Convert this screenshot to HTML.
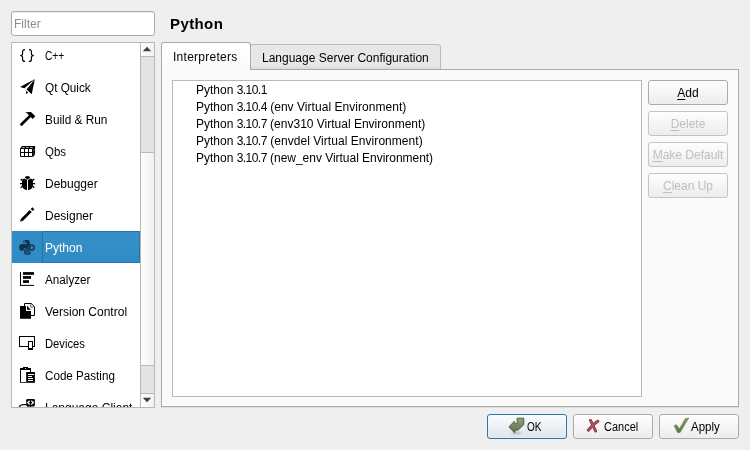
<!DOCTYPE html>
<html><head><meta charset="utf-8"><title>Preferences - Python</title>
<style>
html,body{margin:0;padding:0}
body{width:750px;height:450px;overflow:hidden;background:#efefef;position:relative;font-family:"Liberation Sans","DejaVu Sans",sans-serif;font-size:12px;color:#000}
.abs{position:absolute;box-sizing:border-box}
#filter{left:11px;top:11px;width:144px;height:25px;background:#fff;border:1px solid #aaa;border-radius:3px;box-shadow:inset 0 1px 0 rgba(0,0,0,.07)}
#filter span{position:absolute;left:2px;top:1px;line-height:23px;color:#8c8c8c}
#cat{left:11px;top:42px;width:144px;height:366px;background:#fff;border:1px solid #b8b8b8;overflow:hidden}
.it{position:absolute;left:0;width:128px;height:32px}
.it span{position:absolute;left:33px;top:1px;line-height:32px;white-space:pre;transform-origin:0 50%}
.it svg{position:absolute;left:4px;top:4px;width:24px;height:24px}
.it.sel{background:#308cc6;color:#fff}
#foc{left:30px;top:0;width:98px;height:32px;border:1px solid rgba(20,70,110,.35);border-radius:1px;background:linear-gradient(#ffffff0a,#ffffff00)}
#sb{left:128px;top:0;width:14px;height:364px;border-left:1px solid #b8b8b8;background:#e3e3e3}
#title{left:170px;top:15px;font-size:15px;font-weight:bold;line-height:18px;letter-spacing:.4px}
#pane{left:161px;top:69px;width:578px;height:338px;background:#fafafa;border:1px solid #aaa;box-shadow:0 1px 0 rgba(0,0,0,.06)}
.tab{height:27px;border:1px solid #aaa;border-bottom:none;border-radius:3px 3px 0 0;white-space:pre}
#t1{left:161px;top:42px;width:90px;height:28px;background:linear-gradient(#fff,#fafafa)}
#t1 span{position:absolute;left:11px;top:7px;line-height:14px;letter-spacing:.27px}
#t2{left:250px;top:44px;width:191px;height:25px;border-color:#bbb;background:linear-gradient(#e7e7e7 0,#e7e7e7 85%,#d9d9d9 100%)}
#t2 span{position:absolute;left:11px;top:6px;line-height:14px}
#list{left:172px;top:80px;width:470px;height:317px;background:#fff;border:1px solid #b8b8b8}
#list div{position:absolute;left:23px;height:17px;line-height:17px;white-space:pre;margin-top:1px}
#list i{font-style:normal;letter-spacing:-.55px}
#list b{font-weight:normal}
.btn{width:80px;height:25px;border:1px solid #aaa;border-radius:3px;background:linear-gradient(#fefefe,#ececec);text-align:center;line-height:25px;white-space:pre;box-shadow:inset 0 0 0 1px rgba(255,255,255,.12)}
.btn.dis{color:#bebebe;border-color:#c4c4c4}
.btn u{text-decoration:underline;text-decoration-thickness:1px;text-underline-offset:2px;text-decoration-skip-ink:none}
.btn svg{position:absolute}
.btn span{position:absolute;top:0;line-height:25px;transform-origin:0 50%}
#ok{border-color:#2d76a8;background:linear-gradient(#fafcfd,#dde6ed)}
#root{position:absolute;left:0;top:0;width:750px;height:450px;will-change:transform}
</style></head><body><div id="root">
<div id="filter" class="abs"><span>Filter</span></div>
<div id="cat" class="abs">
 <div class="it" style="top:-4px"><span style="transform:scaleX(.85)">C++</span></div>
 <div class="it" style="top:28px"><span style="transform:scaleX(.98)">Qt Quick</span></div>
 <div class="it" style="top:60px"><span style="transform:scaleX(.985)">Build &amp; Run</span></div>
 <div class="it" style="top:92px"><span style="transform:scaleX(.955)">Qbs</span></div>
 <div class="it" style="top:124px"><span>Debugger</span></div>
 <div class="it" style="top:156px"><span>Designer</span></div>
 <div class="it sel" style="top:188px"><div id="foc" class="abs"></div><span>Python</span></div>
 <div class="it" style="top:220px"><span style="transform:scaleX(.975)">Analyzer</span></div>
 <div class="it" style="top:252px"><span>Version Control</span></div>
 <div class="it" style="top:284px"><span style="transform:scaleX(.935)">Devices</span></div>
 <div class="it" style="top:316px"><span style="transform:scaleX(.97)">Code Pasting</span></div>
 <div class="it" style="top:348px"><span>Language Client</span></div>
 <svg class="abs" style="left:0;top:0" width="142" height="364" viewBox="12 43 142 364">
  <!-- C++ braces -->
  <g transform="translate(16 43)" fill="none" stroke="#000" stroke-width="1.15">
   <path d="M9 6.6 C7 6.6 6.6 7.2 6.6 8.6 L6.6 10.4 C6.6 12 5.8 12.5 4.2 12.5 C5.8 12.5 6.6 13 6.6 14.6 L6.6 16.4 C6.6 17.8 7 18.4 9 18.4"/>
   <path d="M13 6.6 C15 6.6 15.4 7.2 15.4 8.6 L15.4 10.4 C15.4 12 16.2 12.5 17.8 12.5 C16.2 12.5 15.4 13 15.4 14.6 L15.4 16.4 C15.4 17.8 15 18.4 13 18.4"/>
  </g>
  <!-- Qt Quick plane -->
  <g transform="translate(16 75)" fill="#000">
   <path d="M18.9 4 L4 12 L8.4 13.3 Z"/>
   <path d="M18.9 4 L15.7 19.3 L10.6 14.4 Z"/>
   <path d="M9.9 15.8 L10.3 19.3 L12.1 17.4 Z"/>
  </g>
  <!-- Build & Run hammer -->
  <g transform="translate(16 107)" fill="#000">
   <path d="M3.7 17.3 L5.6 19.2 L15.4 9.6 L13.4 7.7 Z"/>
   <path d="M9.3 5.3 L15 5.1 L19.3 9.3 L16.7 12 L12.6 8 L11.4 6.6 Z"/>
  </g>
  <!-- Qbs box -->
  <g transform="translate(16 139)">
   <path d="M4 9.5 L6 7 L19.1 7 L19.1 15.4 L17 18 L17 9.5 Z" fill="#000"/>
   <path d="M4.5 9.5 H16.5 V17.5 H4.5 Z M8.5 9.5 V17.5 M12.5 9.5 V17.5 M4.5 13.5 H16.5" fill="none" stroke="#000" stroke-width="1"/>
   <path d="M6.6 8.1 H9 L8.4 8.9 H6 Z M10.5 8.1 H12.9 L12.3 8.9 H9.9 Z M14.4 8.1 H16.8 L16.2 8.9 H13.8 Z" fill="#b4b4b4"/>
   <path d="M17.7 10.2 L18.3 9.5 V12 L17.7 12.7 Z M17.7 14.4 L18.3 13.7 V15.6 L17.7 16.4 Z" fill="#a8a8a8"/>
  </g>
  <!-- Debugger bug -->
  <g transform="translate(16 171)">
   <path d="M8.9 7.3 C8.9 5.6 10 4.9 11.5 4.9 C13 4.9 14.1 5.6 14.1 7.3 L11.5 8.4 Z" fill="#000"/>
   <path d="M6 9.6 C6 8.3 7 7.8 8.6 7.8 L14.4 7.8 C16 7.8 17 8.3 17 9.6 L17 14 C17 17 14.5 19.1 11.5 19.1 C8.5 19.1 6 17 6 14 Z" fill="#000"/>
   <path d="M4 12.5 H6.2 M16.8 12.5 H19.1 M4.7 8 L6.4 9.5 M18.3 8 L16.6 9.5 M4.7 16.8 L6.4 15.3 M18.3 16.8 L16.6 15.3" stroke="#000" stroke-width="1.25" fill="none"/>
   <path d="M8.9 7.5 L11.5 8.7 L14.1 7.5" stroke="#fff" stroke-width="0.7" fill="none"/>
   <path d="M11.5 8.7 V19.3" stroke="#fff" stroke-width="1" fill="none"/>
  </g>
  <!-- Designer pencil -->
  <g transform="translate(16 203)" fill="#000">
   <path d="M4 18.7 L5 15.7 L13.7 7 L15.7 9 L7 17.7 Z"/>
   <path d="M14.7 6 L16.3 4.3 L18.4 6.3 L16.7 8 Z"/>
  </g>
  <!-- Python -->
  <g transform="translate(16 235)">
   <path d="M7.1 7.7 L7.1 6.6 C7.1 5.3 8.6 4.9 10.5 4.9 C12.4 4.9 13.8 5.4 13.8 6.8 L13.8 11.2 C13.8 12.3 13.2 12.9 12 12.9 L9.6 12.9 C8.2 12.9 7.6 13.8 7.6 14.9 L7.6 15.8 L5.8 15.8 C3.9 15.8 3.1 14.2 3.1 12.3 C3.1 10.4 3.9 9 5.8 9 L10.7 9 L10.7 7.7 Z" fill="#10324a"/>
   <circle cx="8.5" cy="6.4" r="0.65" fill="#3f97cf"/>
   <path d="M14.4 9.8 L16 9.8 C17.6 9.8 18.4 11 18.4 12.5 C18.4 14.1 17.6 15.3 16 15.3 L11.3 15.3 L11.3 17.2 L14.2 17.2 L14.2 18 C14.2 19 13.2 19.3 11.5 19.3 C9.8 19.3 8.7 19 8.7 17.8 L8.7 15.2 C8.7 14.2 9.3 13.7 10.3 13.7 L12.8 13.7 C13.9 13.7 14.4 12.9 14.4 11.5 Z" fill="none" stroke="#10324a" stroke-width="1.05"/>
   <path d="M15.4 10.9 L15.9 10.9 C16.9 10.9 17.3 11.6 17.3 12.5 C17.3 13.5 16.9 14.3 15.9 14.3 L11.2 14.3 C10.2 14.3 9.8 14.8 9.8 15.6 L9.8 17.6 C9.8 18.2 10.4 18.4 11.5 18.4" fill="none" stroke="#10324a" stroke-width="0.9" opacity=".9"/>
  </g>
  <!-- Analyzer -->
  <g transform="translate(16 267)" fill="#000">
   <rect x="4" y="4.9" width="1" height="14"/><rect x="4" y="17.9" width="14" height="1"/>
   <rect x="7" y="5.1" width="11" height="2.7"/><rect x="7" y="9.1" width="8" height="2.7"/><rect x="7" y="13.2" width="6" height="2.7"/>
  </g>
  <!-- Version Control -->
  <g transform="translate(16 299)">
   <path d="M8.5 4.5 H15.2 L18.5 7.6 V16.5 H8.5 Z" fill="#fff" stroke="#000" stroke-width="1"/>
   <path d="M14.8 4.5 V8.1 H18.5" fill="none" stroke="#000" stroke-width=".6"/>
   <path d="M4 7 H10 V11.7 H15 V19.8 H4 Z" fill="#000"/>
   <path d="M10 7 H11 V10.7 H14.7 L15 11.7 H10 Z" fill="#fff"/>
   <path d="M11 6.8 L15 10.7 H11 Z" fill="#000"/>
  </g>
  <!-- Devices -->
  <g transform="translate(16 331)">
   <rect x="3.5" y="5.5" width="15" height="10" fill="none" stroke="#000" stroke-width="1"/>
   <rect x="12" y="10" width="5" height="9" fill="#000"/><rect x="13" y="11" width="3" height="6" fill="#fff"/>
  </g>
  <!-- Code Pasting -->
  <g transform="translate(16 363)">
   <path d="M4 5 H7 V4 H12 V5 H15 V9.5 H14 V7 H5 V18.9 H10.5 V19.8 H4 Z" fill="#000"/>
   <circle cx="9.5" cy="5.5" r="0.6" fill="#fff"/>
   <rect x="10.2" y="9" width="8.7" height="10.8" fill="#000"/>
   <path d="M12 11.5 H18 M12 13.5 H16 M12 15.5 H17 M12 17.5 H17" stroke="#fff" stroke-width="1" fill="none"/>
  </g>
  <!-- Language Client -->
  <g transform="translate(16 395)">
   <rect x="10.2" y="4" width="8.7" height="7.4" rx="1.3" fill="#000"/>
   <path d="M13.8 5.7 L11.7 7.6 L13.8 9.5 M15.3 5.7 L17.4 7.6 L15.3 9.5" stroke="#fff" stroke-width="1.25" fill="none"/>
   <path d="M3.4 12.5 C3.4 10 6 9.3 10.2 9.6" stroke="#000" stroke-width="1.3" fill="none"/>
   <path d="M12 11 V13 M14.5 11 V13" stroke="#000" stroke-width="1"/>
  </g>
 </svg>
 <div id="sb" class="abs">
  <div class="abs" style="left:0;top:0;width:13px;height:14px;background:linear-gradient(90deg,#fdfdfd,#f2f2f2);border-bottom:1px solid #b8b8b8"></div>
  <div class="abs" style="left:0;top:109px;width:13px;height:214px;background:linear-gradient(90deg,#fefefe,#f1f1f1);border-top:1px solid #b8b8b8;border-bottom:1px solid #b8b8b8"></div>
  <div class="abs" style="left:0;top:350px;width:13px;height:14px;background:linear-gradient(90deg,#fdfdfd,#f2f2f2);border-top:1px solid #b8b8b8"></div>
  <svg class="abs" style="left:0;top:0" width="13" height="364" viewBox="141 43 13 364"><path d="M142.8 51.2 L147 46.8 L151.2 51.2 Z" fill="#404040"/><path d="M142.8 397.8 L147 402.2 L151.2 397.8 Z" fill="#404040"/></svg>
 </div>
</div>
<div id="title" class="abs">Python</div>
<div id="pane" class="abs"></div>
<div id="t2" class="abs tab"><span>Language Server Configuration</span></div>
<div id="t1" class="abs tab"><span>Interpreters</span></div>
<div id="list" class="abs">
 <div style="top:0px">Python <i>3.10.1</i></div>
 <div style="top:17px">Python <i>3.10.4</i><b style="letter-spacing:.04px"> (env Virtual Environment)</b></div>
 <div style="top:34px">Python <i>3.10.7</i> (env310 Virtual Environment)</div>
 <div style="top:51px">Python <i>3.10.7</i><b style="letter-spacing:.05px"> (envdel Virtual Environment)</b></div>
 <div style="top:68px">Python <i>3.10.7</i><b style="letter-spacing:-.03px"> (new_env Virtual Environment)</b></div>
</div>
<div class="abs btn" style="left:648px;top:80px"><u>A</u>dd</div>
<div class="abs btn dis" style="left:648px;top:111px"><u>D</u>elete</div>
<div class="abs btn dis" style="left:648px;top:142px"><u>M</u>ake Default</div>
<div class="abs btn dis" style="left:648px;top:173px"><u>C</u>lean Up</div>
<div class="abs btn" id="ok" style="left:487px;top:414px"><svg style="left:-1px;top:-1px" width="80" height="25" viewBox="487 414 80 25"><defs><linearGradient id="gok" x1="0" y1="0" x2="0" y2="1"><stop offset="0" stop-color="#93a381"/><stop offset="1" stop-color="#5c6e4c"/></linearGradient><filter id="bl" x="-50%" y="-50%" width="200%" height="200%"><feGaussianBlur stdDeviation="0.8"/></filter></defs>
<ellipse cx="516.5" cy="433" rx="5" ry="1.1" fill="#000" opacity=".25" filter="url(#bl)"/>
<path d="M517.1 418.2 L523.8 418.2 L523.8 424.6 L518.3 429.9 L515.4 430.2 L514.7 432.8 L508.9 427.1 L514.2 421.3 L515.2 423.8 L517.1 423.6 Z" fill="url(#gok)" stroke="#485839" stroke-width=".9" stroke-linejoin="round"/></svg><span style="left:38.7px;transform:scaleX(.84)">OK</span></div>
<div class="abs btn" id="cancel" style="left:573px;top:414px"><svg style="left:-1px;top:-1px" width="80" height="25" viewBox="573 414 80 25">
<path d="M597.9 421.2 C594 423.6 591.2 426.8 588.3 430.2" fill="none" stroke="#74293a" stroke-width="2.9" stroke-linecap="round"/>
<path d="M590.5 420.4 C592.2 424 594 427.8 595.6 430.9" fill="none" stroke="#74293a" stroke-width="2.9" stroke-linecap="round"/>
<path d="M597.9 421.2 C594 423.6 591.2 426.8 588.3 430.2" fill="none" stroke="#c04e5e" stroke-width="1.6" stroke-linecap="round"/>
<path d="M590.5 420.4 C592.2 424 594 427.8 595.6 430.9" fill="none" stroke="#c04e5e" stroke-width="1.6" stroke-linecap="round"/></svg><span style="left:29.7px;transform:scaleX(.915)">Cancel</span></div>
<div class="abs btn" id="apply" style="left:659px;top:414px"><svg style="left:-1px;top:-1px" width="80" height="25" viewBox="659 414 80 25"><defs><linearGradient id="gap" x1="0" y1="0" x2="0" y2="1"><stop offset="0" stop-color="#86a070"/><stop offset="1" stop-color="#5d7a49"/></linearGradient></defs>
<path d="M674.1 425.6 L676.5 424.8 L679.5 428.7 L685.3 418.6 L688.8 418 L680.1 432.4 L677.6 432.7 Z" fill="url(#gap)" stroke="#557043" stroke-width=".5" stroke-linejoin="round"/></svg><span style="left:31.1px;transform:scaleX(.955)">Apply</span></div>
</div></body></html>
